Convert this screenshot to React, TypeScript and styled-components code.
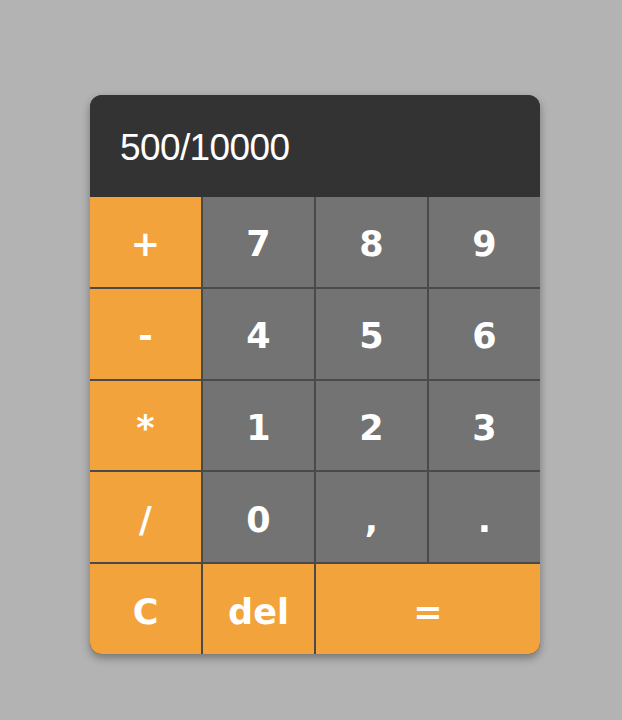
import React from "react";
import styled, { createGlobalStyle } from "styled-components";

const Global = createGlobalStyle`
  html, body {
    margin: 0;
    padding: 0;
    background: #b3b3b3;
  }
`;

const Page = styled.div`
  padding: 95px 0 0 90px;
  min-height: 720px;
  box-sizing: border-box;
`;

const Card = styled.div`
  width: 450px;
  border-radius: 12px;
  overflow: hidden;
  box-shadow: 0 4px 8px rgba(0, 0, 0, 0.35);
  background: #4a4a4a;
`;

const Display = styled.div`
  height: 102px;
  background: #333333;
  color: #ffffff;
  font-family: "Liberation Sans", Arial, sans-serif;
  font-size: 37px;
  letter-spacing: -0.6px;
  display: flex;
  align-items: center;
  padding: 4px 0 0 30px;
  box-sizing: border-box;
`;

const Keys = styled.div`
  display: grid;
  grid-template-columns: repeat(4, 1fr);
  grid-template-rows: repeat(5, 1fr);
  gap: 2px;
  height: 457px;
  background: #4a4a4a;
`;

const Key = styled.button<{ $op?: boolean; $span?: number }>`
  border: none;
  margin: 0;
  padding: 5px 0 0 0;
  background: ${(p) => (p.$op ? "#f2a33b" : "#737373")};
  color: #ffffff;
  font-family: "DejaVu Sans", Verdana, sans-serif;
  font-weight: bold;
  font-size: 35px;
  display: flex;
  align-items: center;
  justify-content: center;
  grid-column: ${(p) => (p.$span ? `span ${p.$span}` : "auto")};
  cursor: pointer;
`;

const rows: { label: string; op?: boolean; span?: number }[] = [
  { label: "+", op: true },
  { label: "7" },
  { label: "8" },
  { label: "9" },
  { label: "-", op: true },
  { label: "4" },
  { label: "5" },
  { label: "6" },
  { label: "*", op: true },
  { label: "1" },
  { label: "2" },
  { label: "3" },
  { label: "/", op: true },
  { label: "0" },
  { label: "," },
  { label: "." },
  { label: "C", op: true },
  { label: "del", op: true },
  { label: "=", op: true, span: 2 },
];

export default function App() {
  return (
    <>
      <Global />
      <Page>
        <Card>
          <Display>500/10000</Display>
          <Keys>
            {rows.map((k, i) => (
              <Key key={i} $op={k.op} $span={k.span}>
                {k.label}
              </Key>
            ))}
          </Keys>
        </Card>
      </Page>
    </>
  );
}
